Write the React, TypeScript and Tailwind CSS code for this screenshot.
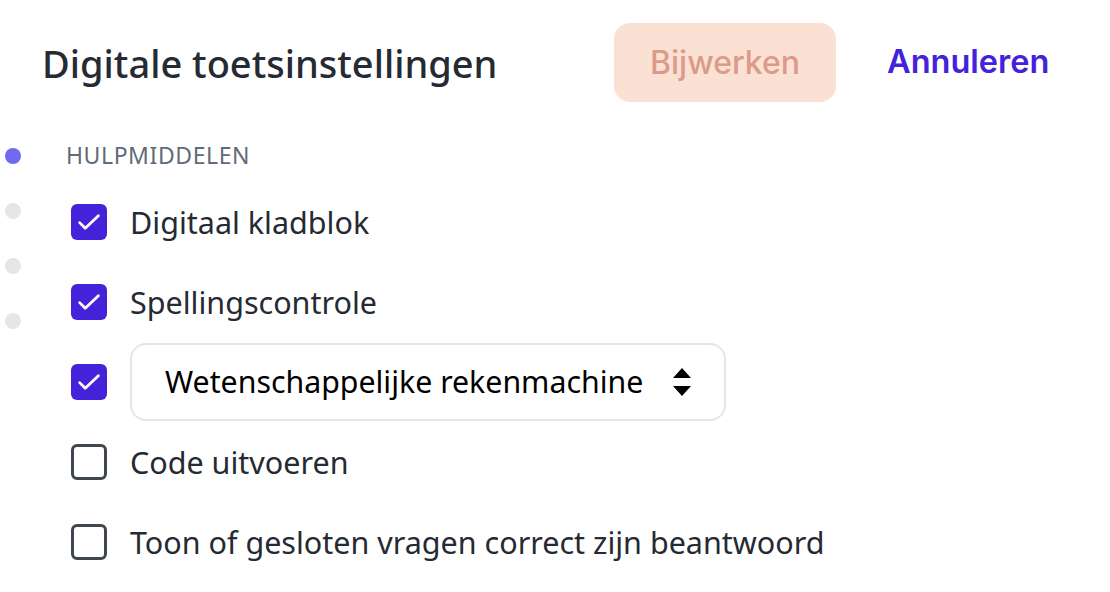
import React from 'react';

const font = { fontFamily: '"Noto Sans", Lato, sans-serif' };

const Check = () => (
  <svg viewBox="0 0 24 24" className="h-[30px] w-[30px]" fill="none" stroke="white" strokeWidth={2.2} strokeLinecap="round" strokeLinejoin="round">
    <path d="M4.5 12.5l4.5 4.5L19.5 7" />
  </svg>
);

const Box = ({ checked }: { checked: boolean }) =>
  checked ? (
    <div className="flex h-9 w-9 shrink-0 items-center justify-center rounded-md bg-[#4322d9]">
      <Check />
    </div>
  ) : (
    <div className="h-9 w-9 shrink-0 rounded-md border-[3px] border-[#3f4650] bg-white" />
  );

export default function App() {
  return (
    <div className="flex h-[592px] w-[1110px] flex-col bg-white text-[#252a33]" style={font}>
      <div className="flex items-center pl-[42px] pt-[23px]">
        <h1 className="w-[572px] text-[38px] font-medium leading-none">Digitale toetsinstellingen</h1>
        <button className="h-[79px] w-[222px] rounded-2xl bg-[#fbe1d3] text-[32px] font-medium text-[#dc9a8a]" style={{ fontFamily: 'Inter, sans-serif' }}>
          Bijwerken
        </button>
        <button className="ml-[51px] text-[32.5px] font-semibold text-[#4322d9]" style={{ fontFamily: 'Inter, sans-serif' }}>
          Annuleren
        </button>
      </div>
      <div className="flex pt-[42px]">
        <div className="flex w-[71px] flex-col items-start gap-[39px] pl-[5px] pt-[4px]">
          <span className="h-4 w-4 rounded-full bg-[#6f6af0]" />
          <span className="h-4 w-4 rounded-full bg-[#e6e6e6]" />
          <span className="h-4 w-4 rounded-full bg-[#e6e6e6]" />
          <span className="h-4 w-4 rounded-full bg-[#e6e6e6]" />
        </div>
        <div className="flex flex-col">
          <div className="-ml-[5px] text-[23px] uppercase leading-none tracking-wide text-[#5f6b7a]">Hulpmiddelen</div>
          <div className="mt-[37px] flex flex-col gap-[44px]">
            <label className="flex items-center gap-[23px] text-[30.5px] leading-9">
              <Box checked /> Digitaal kladblok
            </label>
            <label className="flex items-center gap-[23px] text-[30.5px] leading-9">
              <Box checked /> Spellingscontrole
            </label>
            <div className="-my-[21px] flex items-center gap-[23px]">
              <Box checked />
              <div className="flex h-[78px] w-[596px] items-center justify-between rounded-2xl border-2 border-[#e6e6e6] pl-[33px] pr-[32px] text-[30.3px] text-black">
                Wetenschappelijke rekenmachine
                <svg viewBox="0 0 20 32" className="h-8 w-5" fill="black">
                  <path d="M10 2L19 12H1z M10 30L1 20H19z" />
                </svg>
              </div>
            </div>
            <label className="flex items-center gap-[23px] text-[30.5px] leading-9">
              <Box checked={false} /> Code uitvoeren
            </label>
            <label className="flex items-center gap-[23px] text-[30.5px] leading-9">
              <Box checked={false} /> Toon of gesloten vragen correct zijn beantwoord
            </label>
          </div>
        </div>
      </div>
    </div>
  );
}
